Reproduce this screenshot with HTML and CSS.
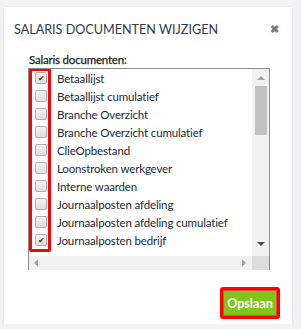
FILE: index.html
```html
<!DOCTYPE html>
<html lang="nl">
<head>
    <meta charset="UTF-8">
    <meta name="viewport" content="width=device-width, initial-scale=1.0">
    <title>Salaris documenten wijzigen</title>
    <link rel="stylesheet" href="styles.css">
</head>
<body>
    <div class="modal">
        <div class="modal-header">
            <h2>SALARIS DOCUMENTEN WIJZIGEN</h2>
            <span class="close">&#10006;</span>
        </div>

        <div class="modal-body">
            <label class="field-label">Salaris documenten:</label>
            <div class="listbox">
                <div class="list-main">
                    <div class="list-view">
                        <!-- markering rond de vinkjes -->
                        <div class="highlight-col"></div>
                        <div class="row"><span class="check checked"></span>Betaallijst</div>
                        <div class="row"><span class="check"></span>Betaallijst cumulatief</div>
                        <div class="row"><span class="check"></span>Branche Overzicht</div>
                        <div class="row"><span class="check"></span>Branche Overzicht cumulatief</div>
                        <div class="row"><span class="check"></span>ClieOpbestand</div>
                        <div class="row"><span class="check"></span>Loonstroken werkgever</div>
                        <div class="row"><span class="check"></span>Interne waarden</div>
                        <div class="row"><span class="check"></span>Journaalposten afdeling</div>
                        <div class="row"><span class="check"></span>Journaalposten afdeling cumulatief</div>
                        <div class="row"><span class="check checked"></span>Journaalposten bedrijf</div>
                    </div>
                    <div class="vscroll">
                        <span class="arrow up"></span>
                        <span class="thumb"></span>
                        <span class="arrow down"></span>
                    </div>
                </div>
                <div class="hscroll">
                    <div class="htrack">
                        <span class="arrow left"></span>
                        <span class="arrow right"></span>
                    </div>
                    <div class="corner"></div>
                </div>
            </div>
        </div>

        <div class="modal-footer">
            <button class="btn-save">Opslaan</button>
        </div>
    </div>
</body>
</html>
```
FILE: styles.css
```css
body {
    margin: 0;
    background-color: #f2f2f4;
    font-family: Lato, "Open Sans", sans-serif;
    color: #222;
}

.modal {
    background-color: white;
    width: 288px;
    height: 317px;
    margin: 7px 0 0 4px;
    box-shadow: 0 1px 3px rgba(0, 0, 0, 0.12);
    display: flex;
    flex-direction: column;
}

.modal-header {
    display: flex;
    justify-content: space-between;
    align-items: center;
    padding: 15px 13px 0 10px;
    height: 14px;
}

.modal-header h2 {
    margin: 0;
    font-size: 12.6px;
    font-weight: normal;
    color: #2f3a4b;
    letter-spacing: 0;
}

.close {
    font-size: 11px;
    color: #7a7a7a;
    font-weight: bold;
}

.modal-body {
    padding: 17px 0 0 24px;
}

.field-label {
    display: block;
    font-size: 11.5px;
    letter-spacing: -0.2px;
    color: #1a1a1a;
    margin-left: 1px;
    height: 15px;
    -webkit-text-stroke: 0.25px #1a1a1a;
}

.listbox {
    width: 240px;
    border: 1px solid #8c8c8c;
    border-bottom: none;
}

.list-main {
    display: flex;
    height: 187px;
}

.list-view {
    position: relative;
    flex: 1;
    overflow: hidden;
}

.highlight-col {
    position: absolute;
    left: 0;
    top: -1px;
    width: 16px;
    height: 178px;
    border: 3px solid #ff0000;
    border-radius: 2px;
}

.row {
    display: flex;
    align-items: center;
    height: 18px;
    font-size: 11.5px;
    letter-spacing: -0.15px;
    color: #1e2a38;
    white-space: nowrap;
}

.check {
    width: 10px;
    height: 10px;
    margin: 0 10px 0 6px;
    border: 1px solid #b0b0b0;
    border-radius: 2px;
    background: linear-gradient(#f2f2f2, #dedede);
    display: flex;
    align-items: center;
    justify-content: center;
    font-size: 8px;
    color: #333;
    line-height: 1;
}

.check.checked::after {
    content: "\2714";
}

.vscroll {
    width: 17px;
    background-color: #f1f1f1;
    display: flex;
    flex-direction: column;
    align-items: center;
}

.thumb {
    width: 12px;
    height: 49px;
    background-color: #c1c1c1;
    margin-top: 6px;
}

.arrow {
    width: 0;
    height: 0;
    border: 4px solid transparent;
}

.arrow.up {
    border-bottom: 4px solid #a3a3a3;
    border-top: none;
    margin-top: 7px;
}

.arrow.down {
    border-top: 4px solid #505050;
    border-bottom: none;
    margin-top: auto;
    margin-bottom: 10px;
}

.hscroll {
    display: flex;
    height: 14px;
}

.htrack {
    flex: 1;
    background-color: #f1f1f1;
    display: flex;
    justify-content: space-between;
    align-items: center;
    padding: 0 6px 0 5px;
}

.arrow.left {
    border-right: 4px solid #a3a3a3;
    border-left: none;
}

.arrow.right {
    border-left: 4px solid #a3a3a3;
    border-right: none;
}

.corner {
    width: 17px;
    background-color: #dcdcdc;
}

.modal-footer {
    display: flex;
    justify-content: flex-end;
    padding: 17px 12px 0 0;
}

.btn-save {
    background-color: #80c41c;
    color: white;
    font-family: Lato, "Open Sans", sans-serif;
    font-size: 12.5px;
    font-weight: bold;
    width: 60px;
    height: 32px;
    border: 3px solid #ff0000;
    border-radius: 3px;
    padding: 0;
    box-shadow: inset 0 0 0 1px #e24a3a;
}
```
